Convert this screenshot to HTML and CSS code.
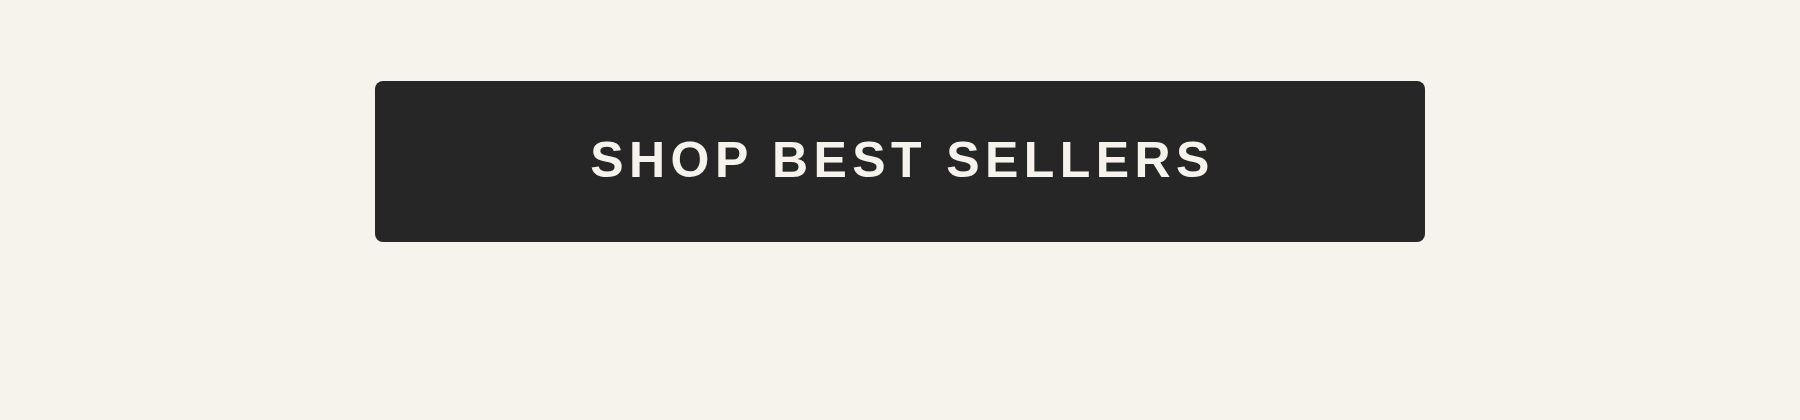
FILE: index.html
```html
<!DOCTYPE html>
<html>
<head>
<meta charset="utf-8">
<link rel="stylesheet" href="styles.css">
</head>
<body>
<main class="page">
  <a class="cta" href="#">SHOP BEST SELLERS</a>
</main>
</body>
</html>
```

FILE: styles.css
```css
html, body {
  margin: 0;
  padding: 0;
  background: #f6f3ec;
}
.page {
  padding-top: 81px;
  display: flex;
  justify-content: center;
}
.cta {
  width: 1050px;
  height: 161px;
  box-sizing: border-box;
  background: #262626;
  border-radius: 8px;
  display: flex;
  align-items: center;
  justify-content: center;
  color: #f6f3ec;
  text-decoration: none;
  font-family: "Liberation Sans", Arial, sans-serif;
  font-weight: 700;
  font-size: 50px;
  letter-spacing: 5.4px;
  padding-left: 5px;
  padding-bottom: 3px;
}
```
